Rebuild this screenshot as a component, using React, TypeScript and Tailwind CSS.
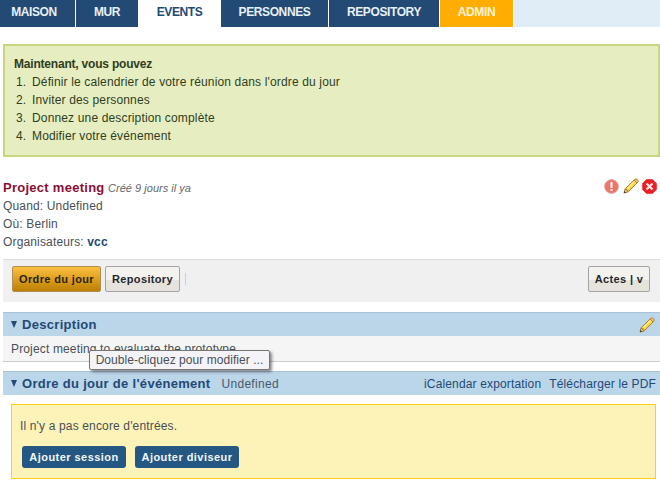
import React from 'react';

const tabs = [
  { label: 'MAISON', width: 'w-[75px] pr-[7px]', cls: 'bg-[#224a75] text-[#e8f0f8]' },
  { label: 'MUR', width: 'w-[62px]', cls: 'bg-[#224a75] text-[#e8f0f8]' },
  { label: 'EVENTS', width: 'w-[81px]', cls: 'bg-white text-[#224a75]' },
  { label: 'PERSONNES', width: 'w-[107px]', cls: 'bg-[#224a75] text-[#e8f0f8]' },
  { label: 'REPOSITORY', width: 'w-[110px]', cls: 'bg-[#224a75] text-[#e8f0f8]' },
  { label: 'ADMIN', width: 'w-[73px]', cls: 'bg-[#ffad00] text-[#fff4d8]' },
];

const steps = [
  "Définir le calendrier de votre réunion dans l'ordre du jour",
  'Inviter des personnes',
  'Donnez une description complète',
  'Modifier votre événement',
];

function Pencil() {
  return (
    <svg width="16" height="16" viewBox="0 0 16 16" className="block">
      <path d="M1 15 L2.2 10.8 L5.2 13.8 Z" fill="#f3d9a8" stroke="#7a5210" strokeWidth="0.8" />
      <path d="M1 15 L1.6 13 L3 14.4 Z" fill="#3a2a10" />
      <path d="M2.6 10.4 L11 2 L14 5 L5.6 13.4 Z" fill="#fbd44c" stroke="#b9801c" strokeWidth="1" />
      <path d="M4.4 10.6 L11.6 3.4" stroke="#fff2a8" strokeWidth="1.2" />
      <path d="M11 2 L12 1 Q13 0.5 14 1.2 L14.8 2 Q15.5 3 15 4 L14 5 Z" fill="#f0b98c" stroke="#b9801c" strokeWidth="0.8" />
    </svg>
  );
}

function WarnIcon() {
  return (
    <svg width="15" height="15" viewBox="0 0 15 15" className="block">
      <circle cx="7.5" cy="7.5" r="6.8" fill="#ee7468" stroke="#d9968c" strokeWidth="1" />
      <rect x="6.5" y="3" width="2" height="6" rx="0.6" fill="#fff" />
      <rect x="6.5" y="10" width="2" height="2" fill="#fff" />
    </svg>
  );
}

function CloseIcon() {
  return (
    <svg width="15" height="15" viewBox="0 0 15 15" className="block">
      <path d="M4.5 0.5 H10.5 L14.5 4.5 V10.5 L10.5 14.5 H4.5 L0.5 10.5 V4.5 Z" fill="#ec1c24" stroke="#f0403c" strokeWidth="0.8" />
      <path d="M4.5 4.5 L10.5 10.5 M10.5 4.5 L4.5 10.5" stroke="#fde4e0" strokeWidth="2.2" />
    </svg>
  );
}

function GreyButton({ children, className }: { children: React.ReactNode; className: string }) {
  return (
    <button className={`h-[26px] rounded-[2px] border border-[#a3a3a3] bg-[linear-gradient(#f4f2ef_0,#f4f2ef_55%,#e6e2dc_55%,#e6e2dc_100%)] text-[11px] font-bold tracking-[0.35px] text-[#24282e] ${className}`}>
      {children}
    </button>
  );
}

function BlueButton({ children }: { children: React.ReactNode }) {
  return (
    <button className="h-[22px] w-[104px] rounded-[3px] bg-[#255783] text-[11px] font-bold tracking-[0.45px] text-[#f2f6fa]">
      {children}
    </button>
  );
}

function Triangle() {
  return <span className="mr-[5px] inline-block h-0 w-0 border-x-[3px] border-t-[7px] border-x-transparent border-t-[#224a75]" />;
}

export default function App() {
  return (
    <div className="relative h-[481px] w-[660px] overflow-hidden bg-white font-['Liberation_Sans',Arial,sans-serif] text-[12px] tracking-[0.15px] text-[#4a4f55]">
      {/* Tabs */}
      <nav className="flex h-[27px] gap-[1px] bg-white">
        {tabs.map((tab) => (
          <div key={tab.label} className={`flex items-center justify-center pb-[3px] text-[12px] font-bold tracking-[-0.4px] ${tab.width} ${tab.cls}`}>
            {tab.label}
          </div>
        ))}
        <div className="flex-1 bg-[#e1edf6]" />
      </nav>

      {/* Notice */}
      <div className="ml-[3px] mt-[17px] h-[113px] border-2 border-[#c9d67f] bg-[#e6edc0] pl-[9px] pt-[9px] text-[12px] leading-[18px] text-[#2f3d1e]">
        <div className="font-bold tracking-[-0.2px]">Maintenant, vous pouvez</div>
        <ol>
          {steps.map((step, i) => (
            <li key={step} className="flex pl-[2px]">
              <span className="w-[16px]">{i + 1}.</span>
              <span>{step}</span>
            </li>
          ))}
        </ol>
      </div>

      {/* Event info */}
      <div className="mt-[22px] flex justify-between pl-[3px] pr-[3px]">
        <div className="leading-[18px]">
          <div>
            <span className="text-[13px] font-bold tracking-[0.27px] text-[#8a0f35]">Project meeting</span>{' '}
            <span className="text-[11px] italic tracking-[0.02px] text-[#666]">Créé 9 jours il ya</span>
          </div>
          <div>Quand: Undefined</div>
          <div>Où: Berlin</div>
          <div>
            Organisateurs: <span className="font-bold text-[#224a75]">vcc</span>
          </div>
        </div>
        <div className="-mt-[1px] flex h-[16px] items-center">
          <WarnIcon />
          <span className="ml-[4px]"><Pencil /></span>
          <span className="ml-[3px]"><CloseIcon /></span>
        </div>
      </div>

      {/* Action bar */}
      <div className="ml-[3px] mt-[8px] flex h-[43px] items-start justify-between border-t border-[#dcdcdc] bg-[#f0f0f0] pl-[9px] pr-[10px] pt-[6px]">
        <div className="flex items-center">
          <button className="h-[26px] w-[89px] rounded-[2px] border border-[#b09050] bg-[linear-gradient(#fcc040,#be7f00)] text-[11px] font-bold tracking-[0.35px] text-[#2a2410]">
            Ordre du jour
          </button>
          <GreyButton className="ml-[4px] w-[75px]">Repository</GreyButton>
          <span className="ml-[5px] h-[12px] w-[1px] bg-[#cfcfcf]" />
        </div>
        <GreyButton className="w-[62px]">Actes | v</GreyButton>
      </div>

      {/* Description */}
      <div className="ml-[3px] mt-[10px] flex h-[24px] items-center justify-between border-t border-[#a5c2d9] bg-[#bbd5e9] pl-[8px] pr-[5px]">
        <div className="flex items-center text-[13px] font-bold tracking-[0.3px] text-[#224a75]">
          <Triangle />
          Description
        </div>
        <Pencil />
      </div>
      <div className="ml-[3px] h-[26px] border-b border-[#cccccc] bg-[#f5f5f5] pl-[8px] pt-[4px] leading-[18px]">
        Project meeting to evaluate the prototype.
      </div>

      {/* Agenda */}
      <div className="ml-[3px] mt-[9px] flex h-[24px] items-center justify-between border-t border-[#a5c2d9] bg-[#bbd5e9] pl-[8px] pr-[4px]">
        <div className="flex items-center">
          <Triangle />
          <span className="text-[13px] font-bold tracking-[0.3px] text-[#224a75]">Ordre du jour de l'événement</span>
          <span className="ml-[11px] tracking-[0.3px] text-[#4a5a6a]">Undefined</span>
        </div>
        <div className="flex gap-[8px] text-[#224a75]">
          <span>iCalendar exportation</span>
          <span>Télécharger le PDF</span>
        </div>
      </div>

      {/* Empty agenda */}
      <div className="ml-[11px] mt-[9px] h-[75px] w-[645px] border border-[#fdd017] bg-[#fdf3b8] pl-[8px] pt-[12px]">
        <div className="leading-[18px]">Il n'y a pas encore d'entrées.</div>
        <div className="mt-[11px] ml-[2px] flex gap-[9px]">
          <BlueButton>Ajouter session</BlueButton>
          <BlueButton>Ajouter diviseur</BlueButton>
        </div>
      </div>

      {/* Tooltip */}
      <div className="absolute left-[89px] top-[350px] flex h-[20px] w-[181px] items-center justify-center rounded-[2px] border border-[#767676] bg-[#f4f4f8] tracking-[0.05px] text-[#4a4f55] shadow-[2px_2px_3px_rgba(0,0,0,0.45)]">
        Double-cliquez pour modifier ...
      </div>
    </div>
  );
}
